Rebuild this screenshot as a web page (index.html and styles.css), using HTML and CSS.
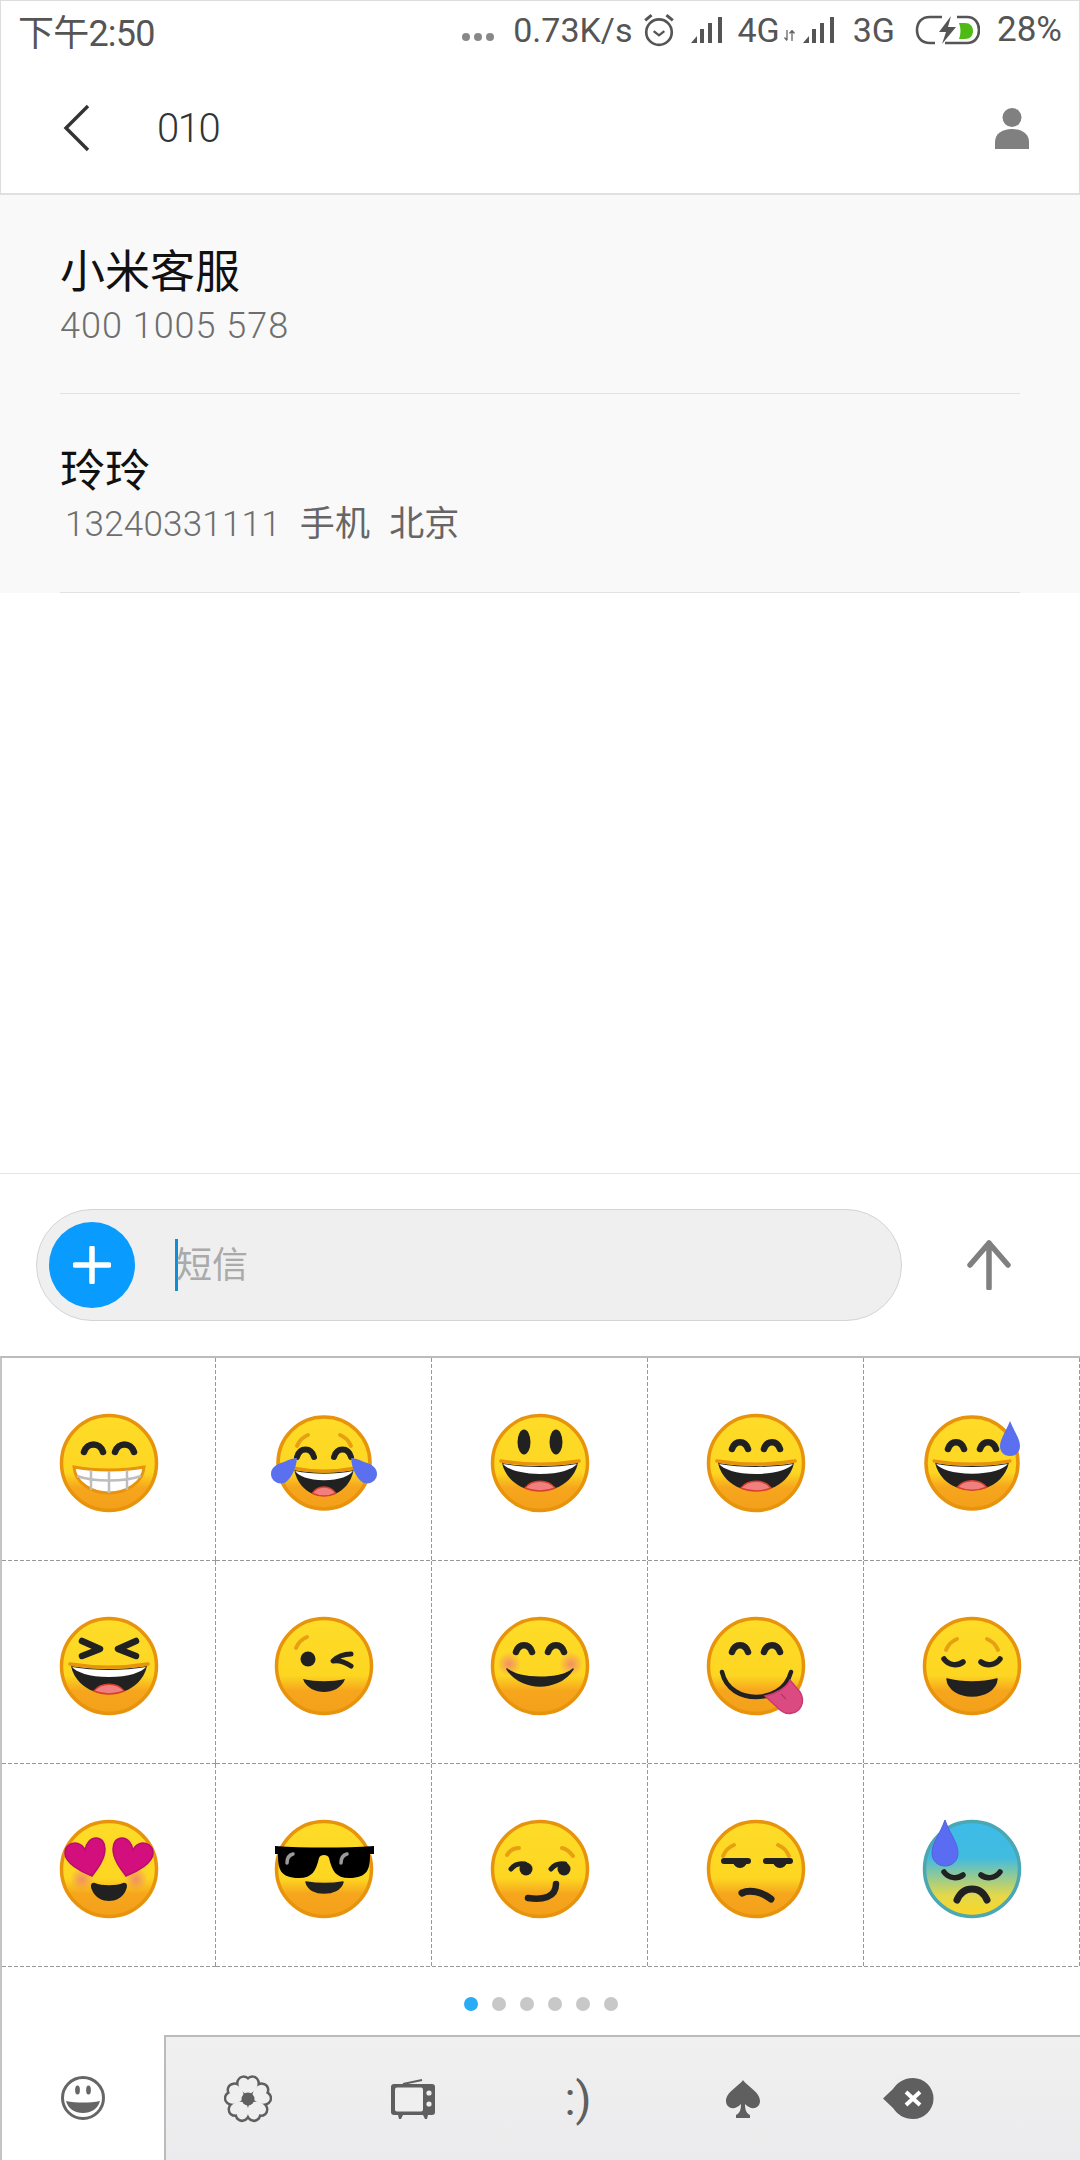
FILE: index.html
```html
<!DOCTYPE html>
<html lang="zh-CN">
<head>
    <meta charset="UTF-8">
    <meta name="viewport" content="width=device-width, initial-scale=1.0">
    <title>短信</title>
    <link rel="stylesheet" href="styles.css">
</head>
<body>
    <!-- shared emoji parts -->
    <svg class="defs" aria-hidden="true">
        <defs>
            <linearGradient id="skin" x1="0" y1="0" x2="0" y2="1">
                <stop offset="0" stop-color="#fedc27"/>
                <stop offset="0.6" stop-color="#fdd622"/>
                <stop offset="0.76" stop-color="#f6a61d"/>
                <stop offset="1" stop-color="#f39f1a"/>
            </linearGradient>
            <linearGradient id="cold" x1="0" y1="0" x2="0" y2="1">
                <stop offset="0" stop-color="#3dbce8"/>
                <stop offset="0.38" stop-color="#41bbe0"/>
                <stop offset="0.78" stop-color="#e4d84a"/>
                <stop offset="1" stop-color="#fdd622"/>
            </linearGradient>
            <radialGradient id="blush">
                <stop offset="0" stop-color="#f0836f" stop-opacity="0.85"/>
                <stop offset="1" stop-color="#f0836f" stop-opacity="0"/>
            </radialGradient>
            <circle id="face" r="47.5" fill="url(#skin)" stroke="#e8930c" stroke-width="3.5"/>
            <g id="laugh">
                <path d="M-38 0C-15 4 15 4 38 0C35 14 24 22 16 25C6 29-6 29-16 25C-24 22-35 14-38 0Z" fill="#212121"/>
                <path d="M-37 1C-15 5 15 5 37 1C33 6 20 11 0 11C-20 11-33 6-37 1Z" fill="#fff"/>
                <path d="M-15 25C-8 16 8 16 15 25C6 29-6 29-15 25Z" fill="#f08080" stroke="#d8402c" stroke-width="1.5"/>
                <path d="M-39-2C-15 2 15 2 39-2" fill="none" stroke="#e8930c" stroke-width="3.5" stroke-linecap="round"/>
            </g>
            <g id="arches" fill="none" stroke="#212121" stroke-width="6.5" stroke-linecap="round">
                <path d="M-24-14C-21-23-11-23-8-14"/>
                <path d="M8-14C11-23 21-23 24-14"/>
            </g>
            <g id="closed" fill="none" stroke="#212121" stroke-width="5.5" stroke-linecap="round">
                <path d="M-28-7C-23 0-14 0-9-4"/>
                <path d="M28-7C23 0 14 0 9-4"/>
            </g>
            <path id="brow" d="M-27-18C-25-23-21-27-16-29" fill="none" stroke="#e8a013" stroke-width="4" stroke-linecap="round"/>
            <g id="petals">
                <path id="petal" d="M0-4C-7-7-11-13-9-18C-7-22-3-22 0-19C3-22 7-22 9-18C11-13 7-7 0-4Z"/>
                <use href="#petal" transform="rotate(72)"/>
                <use href="#petal" transform="rotate(144)"/>
                <use href="#petal" transform="rotate(216)"/>
                <use href="#petal" transform="rotate(288)"/>
            </g>
        </defs>
    </svg>

    <div class="screen">
        <div class="status">
            <span class="clock">下午2:50</span>
            <div class="status-right">
                <span class="more"><i></i><i></i><i></i></span>
                <span class="speed">0.73K/s</span>
                <svg class="ic-alarm" viewBox="0 0 32 32"><circle cx="16" cy="18" r="12" fill="none" stroke="#555" stroke-width="2.5"/><path d="M11 17l5 4 5-4" fill="none" stroke="#555" stroke-width="2.2"/><path d="M3 7l6-5M29 7l-6-5" stroke="#555" stroke-width="2.8"/></svg>
                <svg class="ic-signal" viewBox="0 0 32 26"><path d="M0 26L6 19V26Z M9 12H13V26H9Z M17 6H21V26H17Z M27 0H31V26H27Z" fill="#555"/></svg>
                <span class="net">4G</span>
                <svg class="ic-updown" viewBox="0 0 11 11"><path d="M3 0V10M0.5 7.5L3 10.5M8 1V11M5.5 3.5L8 0.5L10.5 3.5" fill="none" stroke="#666" stroke-width="1.3"/></svg>
                <svg class="ic-signal sig2" viewBox="0 0 32 26"><path d="M0 26L6 19V26Z M9 12H13V26H9Z M17 6H21V26H17Z M27 0H31V26H27Z" fill="#555"/></svg>
                <span class="net">3G</span>
                <svg class="ic-battery" viewBox="0 0 65 30">
                    <path d="M27 2H15C6 2 2 8 2 15C2 22 6 28 15 28H20M42 2H52C60 2 64 8 64 15C64 22 60 28 52 28H30" fill="none" stroke="#555" stroke-width="2.6"/>
                    <path d="M36 1L24 17H31L27 29L41 12H33Z" fill="#555"/>
                    <path d="M44 8H50C55 8 58 11 58 16C58 21 55 24 50 24H44C46 19 46 13 44 8Z" fill="#4dbb14"/>
                </svg>
                <span class="pct">28%</span>
            </div>
        </div>

        <div class="topbar">
            <svg class="ic-back" viewBox="0 0 28 48"><path d="M25 2L3 24L25 46" fill="none" stroke="#333" stroke-width="3.4"/></svg>
            <span class="title">010</span>
            <svg class="ic-person" viewBox="0 0 34 41"><ellipse cx="17" cy="9.5" rx="9.5" ry="9.5" fill="#808080"/><path d="M0 41V34C0 26 7 21 17 21C27 21 34 26 34 34V41Z" fill="#808080"/></svg>
        </div>

        <div class="contacts">
            <div class="contact">
                <div class="name">小米客服</div>
                <div class="sub">400 1005 578</div>
            </div>
            <div class="contact">
                <div class="name">玲玲</div>
                <div class="sub sub-mobile"><span>13240331111</span><span class="tag">手机</span><span class="tag">北京</span></div>
            </div>
        </div>

        <div class="spacer"></div>

        <div class="compose">
            <div class="pill">
                <div class="add"><svg viewBox="0 0 38 38"><path d="M19 2V36M2 19H36" stroke="#fff" stroke-width="5.5" stroke-linecap="round"/></svg></div>
                <span class="cursor"></span>
                <span class="placeholder">短信</span>
            </div>
            <svg class="ic-send" viewBox="0 0 44 50"><path d="M22 48V3M3 25L22 3L41 25" fill="none" stroke="#808080" stroke-width="5.5" stroke-linecap="round" stroke-linejoin="round"/></svg>
        </div>

        <div class="emoji-grid">
            <!-- row 1 -->
            <div class="cell"><svg class="emoji" viewBox="-60 -60 120 120">
                <use href="#face"/>
                <path d="M-25-11C-22-21-9-21-6-11M6-11C9-21 22-21 25-11" fill="none" stroke="#212121" stroke-width="6.5" stroke-linecap="round"/>
                <path d="M-35 4C-15 8 15 8 35 4C34 20 17 30 0 30C-17 30-34 20-35 4Z" fill="#fff" stroke="#e8930c" stroke-width="3"/>
                <path d="M-18 7V27M0 8V30M18 7V27M-32 13C-15 19 15 19 32 13" fill="none" stroke="#bdbdbd" stroke-width="2.5"/>
            </svg></div>
            <div class="cell"><svg class="emoji" viewBox="-60 -60 120 120">
                <circle r="46" fill="url(#skin)" stroke="#e8930c" stroke-width="3.5"/>
                <use href="#brow" transform="translate(0 1)"/>
                <use href="#brow" transform="scale(-1 1) translate(0 1)"/>
                <path d="M-27-6C-24-16-13-16-10-6M10-6C13-16 24-16 27-6" fill="none" stroke="#212121" stroke-width="6" stroke-linecap="round"/>
                <use href="#laugh" transform="translate(0 7) scale(.78 .93)"/>
                <path d="M-27-5C-28 6-32 14-38 19C-45 23-53 18-53 11C-53 4-47 1-40-1C-36-3-30-5-27-5Z" fill="#5a70ee"/>
                <path d="M27-5C28 6 32 14 38 19C45 23 53 18 53 11C53 4 47 1 40-1C36-3 30-5 27-5Z" fill="#5a70ee"/>
            </svg></div>
            <div class="cell"><svg class="emoji" viewBox="-60 -60 120 120">
                <use href="#face"/>
                <ellipse cx="-16" cy="-21" rx="6.5" ry="12.5" fill="#212121"/>
                <ellipse cx="16" cy="-21" rx="6.5" ry="12.5" fill="#212121"/>
                <use href="#laugh"/>
            </svg></div>
            <div class="cell"><svg class="emoji" viewBox="-60 -60 120 120">
                <use href="#face"/>
                <use href="#arches"/>
                <use href="#laugh"/>
            </svg></div>
            <div class="cell"><svg class="emoji" viewBox="-60 -60 120 120">
                <circle r="46" fill="url(#skin)" stroke="#e8930c" stroke-width="3.5"/>
                <use href="#arches"/>
                <use href="#laugh" transform="scale(.97)"/>
                <path d="M38-42C42-32 48-24 48-17C48-11 44-7 38-7C32-7 28-11 28-17C28-24 34-32 38-42Z" fill="#5a70f0"/>
            </svg></div>
            <!-- row 2 -->
            <div class="cell"><svg class="emoji" viewBox="-60 -60 120 120">
                <use href="#face"/>
                <path d="M-27-25L-9-17L-27-10M27-25L9-17L27-10" fill="none" stroke="#212121" stroke-width="6.5" stroke-linecap="round" stroke-linejoin="round"/>
                <use href="#laugh"/>
            </svg></div>
            <div class="cell"><svg class="emoji" viewBox="-60 -60 120 120">
                <use href="#face"/>
                <use href="#brow" transform="translate(-1 0)"/>
                <circle cx="-16" cy="-7" r="7.5" fill="#212121"/>
                <path d="M27-12C19-12 13-9 9-5C15-6 21-4 27 0" fill="none" stroke="#212121" stroke-width="5" stroke-linecap="round" stroke-linejoin="round"/>
                <path d="M-21 13C-8 16 8 16 21 13C18 22 8 26 0 26C-8 26-18 22-21 13Z" fill="#212121"/>
            </svg></div>
            <div class="cell"><svg class="emoji" viewBox="-60 -60 120 120">
                <use href="#face"/>
                <circle cx="-31" cy="-2" r="12" fill="url(#blush)"/>
                <circle cx="31" cy="-2" r="12" fill="url(#blush)"/>
                <use href="#arches"/>
                <path d="M-33 3C-20 14 20 14 33 3C25 16 10 20 0 20C-10 20-25 16-33 3Z" fill="#212121" stroke="#212121" stroke-width="1.5" stroke-linejoin="round"/>
            </svg></div>
            <div class="cell"><svg class="emoji" viewBox="-60 -60 120 120">
                <use href="#face"/>
                <use href="#arches"/>
                <path d="M-34 6C-30 24-14 31 0 31C14 31 30 24 35 6" fill="none" stroke="#212121" stroke-width="4.5" stroke-linecap="round"/>
                <path d="M9 30C20 28 30 22 34 14L44 26C50 36 44 46 36 47C30 49 26 46 22 42Z" fill="#db4b82" stroke="#c83a70" stroke-width="1.5"/>
                <path d="M25 28L30 33" stroke="#b33568" stroke-width="1.2"/>
            </svg></div>
            <div class="cell"><svg class="emoji" viewBox="-60 -60 120 120">
                <use href="#face"/>
                <use href="#brow" transform="translate(1 2)"/>
                <use href="#brow" transform="scale(-1 1) translate(1 2)"/>
                <use href="#closed"/>
                <path d="M-25 13C-10 17 10 17 25 13C24 24 12 30 0 30C-12 30-24 24-25 13Z" fill="#212121" stroke="#212121" stroke-width="1.5" stroke-linejoin="round"/>
            </svg></div>
            <!-- row 3 -->
            <div class="cell"><svg class="emoji" viewBox="-60 -60 120 120">
                <use href="#face"/>
                <circle cx="-27" cy="10" r="12" fill="url(#blush)"/>
                <circle cx="27" cy="10" r="12" fill="url(#blush)"/>
                <path d="M-17 7C-28 3-44-6-44-16C-44-24-36-28-30-25C-27-24-25-21-24-19C-23-25-19-31-13-31C-7-31-4-26-4-20C-4-10-11-1-17 7Z" fill="#d20f7c" stroke="#b80e6e" stroke-width="1.5"/>
                <path d="M17 7C28 3 44-6 44-16C44-24 36-28 30-25C27-24 25-21 24-19C23-25 19-31 13-31C7-31 4-26 4-20C4-10 11-1 17 7Z" fill="#d20f7c" stroke="#b80e6e" stroke-width="1.5"/>
                <path d="M-14 14C-8 17 8 17 14 14C18 13 19 17 17 21C14 29 6 32 0 32C-6 32-14 29-17 21C-19 17-18 13-14 14Z" fill="#212121"/>
            </svg></div>
            <div class="cell"><svg class="emoji" viewBox="-60 -60 120 120">
                <use href="#face"/>
                <path d="M-49-23C-20-21 20-21 50-23V-15H46C46 0 44 9 25 9C12 9 8 2 5-11C4-15-4-15-5-11C-8 2-12 9-25 9C-44 9-46 0-46-15H-49Z" fill="#000"/>
                <path d="M-37-6C-37-11-35-14-31-15M17-6C17-11 19-14 23-15" fill="none" stroke="#9a9a9a" stroke-width="3.5" stroke-linecap="round"/>
                <path d="M-18 13C-6 15 7 15 19 13C17 21 8 24 0 24C-8 24-16 21-18 13Z" fill="#212121" stroke="#212121" stroke-width="1.5" stroke-linejoin="round"/>
            </svg></div>
            <div class="cell"><svg class="emoji" viewBox="-60 -60 120 120">
                <use href="#face"/>
                <path d="M-33-14C-30-19-26-21-21-21M22-21C27-20 30-17 33-13" fill="none" stroke="#e8a013" stroke-width="4" stroke-linecap="round"/>
                <circle cx="-14" cy="0" r="6.5" fill="#212121"/>
                <circle cx="24" cy="0" r="6.5" fill="#212121"/>
                <path d="M-29 0C-26-4-21-6-15-5M11 0C14-4 19-6 25-5" fill="none" stroke="#212121" stroke-width="5" stroke-linecap="round"/>
                <path d="M-12 29C2 31 16 29 16 15" fill="none" stroke="#212121" stroke-width="6.5" stroke-linecap="round"/>
            </svg></div>
            <div class="cell"><svg class="emoji" viewBox="-60 -60 120 120">
                <use href="#face"/>
                <use href="#brow" transform="translate(-6 5)"/>
                <use href="#brow" transform="scale(-1 1) translate(-6 5)"/>
                <path d="M-32-8H-8M10-8H34" stroke="#212121" stroke-width="6" stroke-linecap="round"/>
                <path d="M-23-8A7 7 0 0 0-9-8ZM17-8A7 7 0 0 0 31-8Z" fill="#212121"/>
                <path d="M-14 24C-6 20 6 23 15 30" fill="none" stroke="#212121" stroke-width="7" stroke-linecap="round"/>
            </svg></div>
            <div class="cell"><svg class="emoji" viewBox="-60 -60 120 120">
                <circle r="47.5" fill="url(#cold)" stroke="#4aa7b4" stroke-width="3.5"/>
                <g transform="translate(0 10)"><use href="#closed"/></g>
                <path d="M-15 31C-11 22-5 20 0 20C5 20 11 22 15 31" fill="none" stroke="#212121" stroke-width="7" stroke-linecap="round"/>
                <path d="M-27-49C-22-35-14-26-14-16C-14-8-20-3-27-3C-34-3-40-8-40-16C-40-26-32-35-27-49Z" fill="#5a6cf2" stroke="#5560e0" stroke-width="1"/>
            </svg></div>
        </div>

        <div class="pager">
            <i class="on"></i><i></i><i></i><i></i><i></i><i></i>
        </div>

        <div class="tabs">
            <div class="tab tab-on">
                <svg class="ic-smile" viewBox="0 0 44 44"><circle cx="22" cy="22" r="20.5" fill="#fff" stroke="#666" stroke-width="3"/><ellipse cx="16.5" cy="14" rx="2.4" ry="4.6" fill="#666"/><ellipse cx="27.5" cy="14" rx="2.4" ry="4.6" fill="#666"/><path d="M5 25C15 27 29 27 39 25C37 33 30 37 22 37C14 37 7 33 5 25Z" fill="#666"/></svg>
            </div>
            <div class="tab-rest">
                <div class="tab">
                    <svg class="ic-flower" viewBox="-24 -24 48 48">
                        <use href="#petals" fill="#5f5f5f" stroke="#5f5f5f" stroke-width="5" stroke-linejoin="round"/>
                        <use href="#petals" fill="#efefef"/>
                        <circle r="6.5" fill="#5f5f5f"/>
                    </svg>
                </div>
                <div class="tab">
                    <svg class="ic-tv" viewBox="0 0 44 40"><path d="M12 5L31 1" stroke="#5f5f5f" stroke-width="2"/><rect y="5" width="44" height="31" rx="3" fill="#5f5f5f"/><rect x="4" y="8.5" width="28" height="24" rx="2" fill="#efefef"/><circle cx="38" cy="14" r="2.6" fill="#efefef"/><circle cx="38" cy="25" r="2.6" fill="#efefef"/><path d="M7 36H12L10 40H8ZM32 36H37L36 40H34Z" fill="#5f5f5f"/></svg>
                </div>
                <div class="tab"><span class="smiley">:)</span></div>
                <div class="tab">
                    <svg class="ic-spade" viewBox="0 0 34 38"><path d="M17 0C21 6 34 12 34 21C34 27 28 30 23 27C21 26 20 25 19 24C19 29 20 33 24 35V38H10V35C14 33 15 29 15 24C14 25 13 26 11 27C6 30 0 27 0 21C0 12 13 6 17 0Z" fill="#5f5f5f"/></svg>
                </div>
                <div class="tab">
                    <svg class="ic-del" viewBox="0 0 51 41"><path d="M30 0A20.5 20.5 0 1 1 30 41C21 41 15 37 10 30L0 20.5L10 11C15 4 21 0 30 0Z" fill="#5f5f5f"/><path d="M23 14L37 27M37 14L23 27" stroke="#fff" stroke-width="4"/></svg>
                </div>
            </div>
        </div>
    </div>
</body>
</html>
```

FILE: styles.css
```css
body {
    margin: 0;
    padding: 0;
    background-color: #fff;
    font-family: Roboto, "Noto Sans CJK SC", sans-serif;
}

.defs {
    display: block;
    width: 0;
    height: 0;
}

.screen {
    width: 1080px;
    height: 2160px;
    display: flex;
    flex-direction: column;
    box-sizing: border-box;
    overflow: hidden;
}

/* status bar */
.status {
    height: 60px;
    flex: none;
    box-sizing: border-box;
    padding: 0 17px 2px 17px;
    border-top: 1px solid #ddd;
    border-left: 1px solid #ddd;
    border-right: 1px solid #ddd;
    display: flex;
    align-items: center;
    justify-content: space-between;
    color: #555;
    font-size: 34px;
}

.clock {
    font-size: 36px;
    letter-spacing: -.8px;
}

.status-right {
    display: flex;
    align-items: center;
}

.more {
    display: flex;
    gap: 4px;
    margin: 14px 19px 0 0;
}

.more i {
    width: 8px;
    height: 8px;
    border-radius: 50%;
    background-color: #888;
}

.ic-alarm {
    width: 34px;
    height: 34px;
    margin: 0 15px 0 10px;
}

.ic-signal {
    width: 32px;
    height: 26px;
    margin-right: 14px;
}

.sig2 {
    margin-left: 8px;
    margin-right: 18px;
}

.ic-updown {
    width: 11px;
    height: 11px;
    margin: 11px 0 0 4px;
}

.ic-battery {
    width: 65px;
    height: 30px;
    margin: 0 17px 0 20px;
}

.pct {
    font-size: 35px;
}

/* title row */
.topbar {
    height: 135px;
    flex: none;
    box-sizing: border-box;
    padding: 3px 50px 0 62px;
    border-left: 1px solid #ddd;
    border-right: 1px solid #ddd;
    border-bottom: 2px solid #e0e0e0;
    display: flex;
    align-items: center;
}

.ic-back {
    width: 28px;
    height: 48px;
}

.title {
    margin-left: 66px;
    flex: 1;
    font-size: 40px;
    font-weight: 300;
    letter-spacing: -1.5px;
    color: #333;
}

.ic-person {
    width: 34px;
    height: 41px;
}

/* contact list */
.contacts {
    flex: none;
    background-color: #f9f9f9;
}

.contact {
    height: 199px;
    box-sizing: border-box;
    margin: 0 60px;
    padding-top: 48px;
    border-bottom: 1px solid #e2e2e2;
}

.name {
    height: 60px;
    line-height: 60px;
    font-size: 45px;
    color: #111;
}

.sub {
    height: 46px;
    line-height: 46px;
    font-size: 36px;
    font-weight: 300;
    color: #6e6e6e;
    letter-spacing: 1px;
}

.sub-mobile {
    display: flex;
    padding-left: 5px;
    font-size: 35px;
    letter-spacing: .2px;
}

.tag {
    margin-left: 19px;
    font-weight: 400;
    color: #666;
}

.spacer {
    flex: 1;
}

/* input row */
.compose {
    height: 183px;
    flex: none;
    box-sizing: border-box;
    padding-left: 36px;
    border-top: 1px solid #e4e4e4;
    display: flex;
    align-items: center;
}

.pill {
    width: 866px;
    height: 112px;
    box-sizing: border-box;
    padding-left: 12px;
    background-color: #efefef;
    border: 1px solid #d4d4d4;
    border-radius: 56px;
    display: flex;
    align-items: center;
}

.add {
    width: 86px;
    height: 86px;
    border-radius: 50%;
    background-color: #0a9bff;
    display: flex;
    align-items: center;
    justify-content: center;
}

.add svg {
    width: 38px;
    height: 38px;
}

.cursor {
    width: 3px;
    height: 52px;
    margin-left: 40px;
    background-color: #0c8fd8;
}

.placeholder {
    margin-left: -2px;
    padding-bottom: 6px;
    font-size: 36px;
    color: #aaa;
}

.ic-send {
    width: 44px;
    height: 50px;
    margin-left: 65px;
}

/* emoji grid */
.emoji-grid {
    flex: none;
    display: grid;
    grid-template-columns: 214px repeat(4, 216px);
    grid-auto-rows: 203px;
    border-top: 2px solid #bbb;
    border-left: 2px solid #c4c4c4;
}

.cell {
    box-sizing: border-box;
    padding-top: 7px;
    background-image:
        repeating-linear-gradient(90deg, #999 0 4px, transparent 4px 6px),
        repeating-linear-gradient(180deg, #999 0 4px, transparent 4px 6px);
    background-size: 100% 1px, 1px 100%;
    background-position: left bottom, right top;
    background-repeat: no-repeat;
    display: flex;
    align-items: center;
    justify-content: center;
}

.emoji {
    width: 120px;
    height: 120px;
}

.pager {
    height: 68px;
    flex: none;
    border-left: 2px solid #c4c4c4;
    display: flex;
    align-items: center;
    justify-content: center;
    gap: 14px;
    padding-top: 5px;
    box-sizing: border-box;
}

.pager i {
    width: 14px;
    height: 14px;
    border-radius: 50%;
    background-color: #c8c8c8;
}

.pager .on {
    background-color: #29abf5;
}

/* bottom tabs */
.tabs {
    height: 125px;
    flex: none;
    display: flex;
    border-left: 2px solid #c4c4c4;
}

.tab {
    display: flex;
    align-items: center;
    justify-content: center;
}

.tab-on {
    width: 162px;
    flex: none;
}

.tab-rest {
    flex: 1;
    display: grid;
    grid-template-columns: 164px 166px 164px 166px 164px;
    border-top: 2px solid #bbb;
    border-left: 2px solid #bbb;
    background: linear-gradient(#f0f0f0, #ebebed);
}

.ic-smile {
    width: 44px;
    height: 44px;
}

.ic-flower {
    width: 48px;
    height: 48px;
}

.ic-tv {
    width: 44px;
    height: 40px;
}

.ic-spade {
    width: 34px;
    height: 38px;
}

.ic-del {
    width: 51px;
    height: 41px;
}

.smiley {
    font-size: 46px;
    line-height: 44px;
    color: #5f5f5f;
}
```
